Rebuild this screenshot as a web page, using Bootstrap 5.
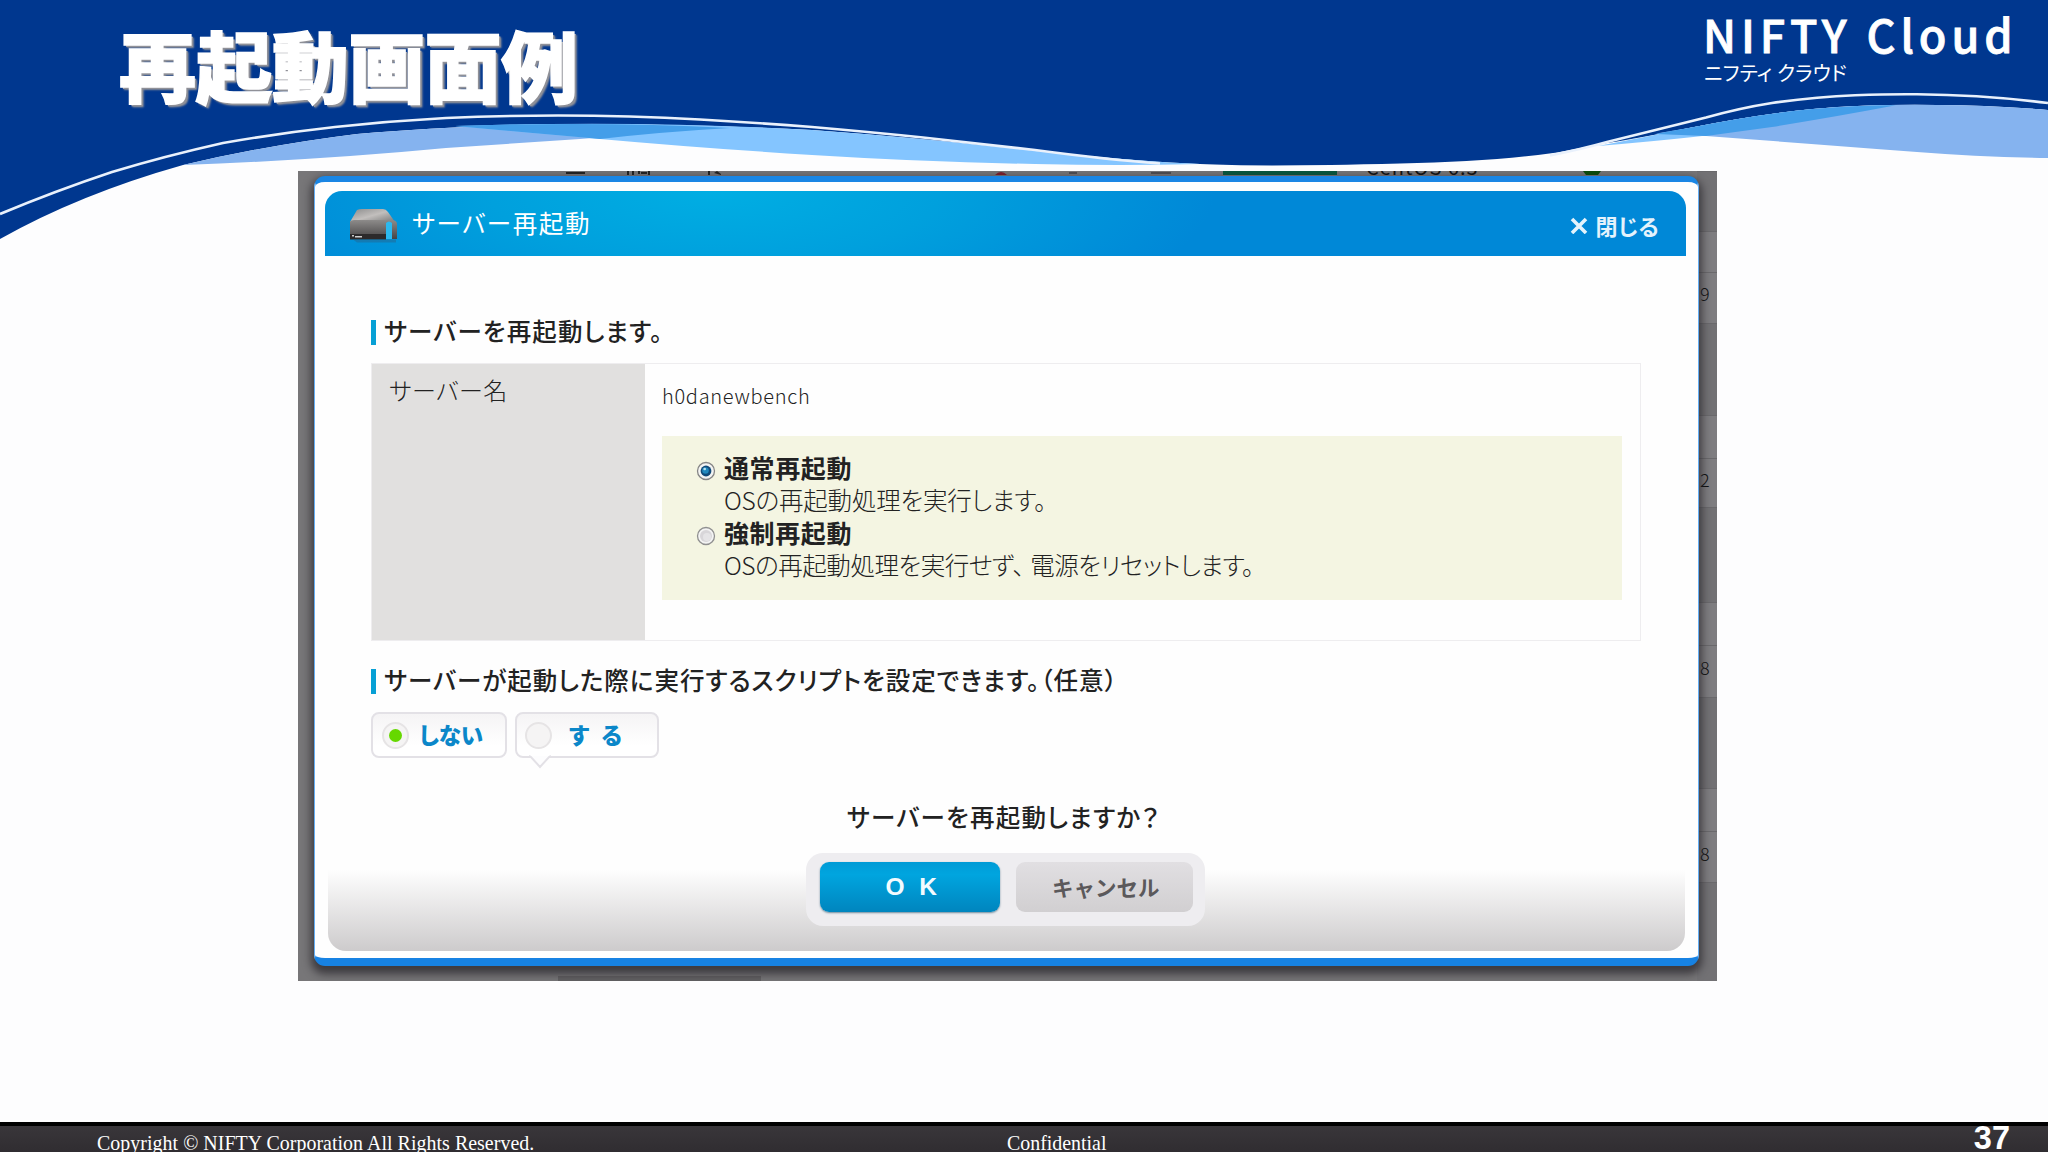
<!DOCTYPE html>
<html lang="ja">
<head>
<meta charset="utf-8">
<title>再起動画面例</title>
<link rel="stylesheet" href="https://cdn.jsdelivr.net/npm/bootstrap@5.3.0/dist/css/bootstrap.min.css">
<script src="https://cdn.jsdelivr.net/npm/bootstrap@5.3.0/dist/js/bootstrap.bundle.min.js"></script>
<style>
body{width:2048px;height:1152px;background:#fdfdfe;font-family:"Noto Sans CJK JP",sans-serif;color:#222;font-feature-settings:"palt"}
.slide{height:1152px}
.top-band{height:171px;color:#fff}
.waves{left:0;top:0;width:2048px;height:242px}
.slide-title{font-size:77px;font-weight:900;line-height:1;letter-spacing:-.6px;margin:25px 0 0 119px;font-feature-settings:normal;-webkit-text-stroke:1.5px #fff;text-shadow:3px 3px 2px #8f9097,2px 2px 0 #a9a9ae}
.brand{width:345px;padding-top:9px}
.brand-en{font-size:45px;line-height:50px;font-weight:500;letter-spacing:4.9px;white-space:nowrap;-webkit-text-stroke:.8px #fff}
.brand-ja{font-size:20px;line-height:26px;letter-spacing:.2px;margin-top:1px;padding-left:1px}
.capture{width:1419px;height:810px;margin-left:298px;background:#777678;overflow:hidden}
.page-behind{inset:0}
.cut-row{height:5px;overflow:hidden;left:0;right:0;top:0}
.cut-row span{position:absolute;line-height:20px;font-size:20px;color:#111;letter-spacing:1px}
.rail{right:0;top:0;width:20px;font-size:18px;color:#111;font-weight:300}
.rail div{border-top:1px solid #6a696c;padding-left:3px}
.lite{background:#7e7d80}.dim{background:#727174}
.dialog-box{margin:5px 0 0 16px;width:1385px;height:790px;border:1px solid #64aef5;border-top:6px solid #1a86e4;border-bottom:8px solid #1782e3;border-radius:11px;background:#fefefe;box-shadow:0 5px 8px 3px rgba(35,33,38,.7);padding:9px 12px 7px 10px}
.dialog-head{height:65px;border-radius:17px 17px 0 0;background:radial-gradient(ellipse 500px 160px at 390px 0,#00aee3 0%,#00a0dd 45%,#0088d7 100%);color:#fff;padding:0 27px 0 22px}
.dlg-title{font-size:24.5px;line-height:30px;margin:-2px 0 0 15px;letter-spacing:1.6px}
.closer{font-size:22px;font-weight:700;line-height:30px;color:#e4f3fc;margin-top:2px;letter-spacing:.4px}
.dialog-main{padding:64px 43px 0 46px}
.sec{font-size:24.5px;line-height:21px;height:25px;font-weight:500;border-left:5px solid #07a0d5;padding-left:8px;white-space:nowrap;letter-spacing:1.15px}
.sec-b{letter-spacing:1px;margin-top:28px}
.info{margin-top:18px;width:1270px;height:278px;border:1.5px solid #eeedef}
.info-key{width:273px;background:#e1e0df;padding:10px 0 0 17px;font-size:24px;line-height:32px;font-weight:300;color:#222;letter-spacing:.5px}
.info-val{padding:17px 18px 0 17px}
.srv{font-size:20px;line-height:30px;font-weight:300;letter-spacing:.7px;margin-bottom:25px}
.opts{background:#f4f5e2;height:164px;padding:15px 0 0 34px}
.opts strong{font-size:25px;line-height:33px;font-weight:700;letter-spacing:.6px;display:block}
.opts p{font-size:24.5px;line-height:33px;font-weight:300;margin:-1px 0 0;white-space:nowrap;letter-spacing:-.2px}
.opts .p-two{letter-spacing:-.45px}
.comma{margin-right:6px}
.pill{height:46px;border:2px solid #e3e1e6;border-radius:8px;background:linear-gradient(#f5f4f5,#fff 75%);font-size:22.5px;font-weight:900;color:#0b87c9;position:relative;line-height:30px}
.pill-text{margin-top:-2px}
.dot{width:27px;height:27px;border-radius:50%;border:2px solid #e6e4e5;background:#f5f4f4}
.dot i{width:13px;height:13px;border-radius:50%;background:#66d800}
.tail{position:absolute;left:12px;top:41px}
.dialog-foot{height:81px;margin:0 1px 0 3px;border-radius:0 0 18px 18px;background:linear-gradient(#fefefe,#cdcbcc)}
.ask{font-size:24.5px;line-height:28px;font-weight:500;margin:45px 4px 0 0;letter-spacing:1.25px}
.tray{width:399px;height:73px;border-radius:17px;background:#eeedf0;left:491px;top:671px;padding:9px 12px 0 14px}
.act{height:50px;border-radius:9px;border:0;line-height:48px;padding:0;font-weight:700}
.ok{width:180px;background:linear-gradient(#009bd6,#00a5df 25%,#0085be);color:#f3fbff;font-size:24.5px;box-shadow:0 1px 2px #6f8c9c;font-family:"Liberation Sans",sans-serif;word-spacing:8px;padding-left:3px}
.no{width:178px;background:linear-gradient(#e1dfe2,#d1cfd1);color:#5b595b;font-size:21.5px;padding-left:3px;line-height:46px}
.foot{height:30px;border-top:4px solid #000;background:linear-gradient(#39363a,#302d31);color:#fff;font-family:"Liberation Serif",serif;font-size:20px;font-feature-settings:normal;padding:0 38px 0 97px;overflow:hidden}
.foot-note{line-height:34px;font-size:19.9px}
.foot-left{width:910px;letter-spacing:.05px}
.page-no{font:700 32.500px/24px "Liberation Sans",sans-serif}
</style>
</head>
<body>
<div class="slide d-flex flex-column overflow-hidden">
<header class="top-band position-relative flex-shrink-0">
<svg class="waves position-absolute" viewBox="0 0 2048 242">
<path fill="#00378f" d="M0 0H2048V110Q1990 105 1937 105Q1870 104 1813 109Q1760 114 1689 128Q1640 138 1607 143L1557 152.500Q1490 162 1400 163.500Q1260 167 1200 164Q1146 162 1035 151Q923 138 812 130Q700 124 558 124Q446 126 357 134Q268 145 183 165Q80 194 0 239Z"/>
<path fill="#85b3ef" d="M183 165Q268 145 357 134Q446 126 558 124Q640 123.500 730 128Q670 132 580 139L446 148Q320 160 183 165Z"/>
<path fill="#84c5ff" d="M455 126Q640 120 812 130Q923 138 1035 151Q1146 162 1200 164Q1120 166 1035 164Q923 162 812 155Q700 148 600 139Q520 132 455 126Z"/>
<path fill="#449ee9" d="M455 126Q600 121 730 128Q660 132 600 139Q520 132 455 126Z"/>
<path fill="#84c5ff" d="M1598 146Q1640 138 1689 128Q1760 114 1813 109Q1855 105.500 1896 105.300Q1840 116 1772 127Q1706 137 1598 146Z"/>
<path fill="#85b3ef" d="M1656 133.500L1689 128Q1760 114 1813 109Q1870 104 1937 105Q1990 105 2048 110V158Q1980 157 1917 152Q1800 143 1706 136Z"/>
<path fill="#449ee9" d="M1656 134Q1670 131 1689 128Q1760 114 1813 109Q1855 105.500 1896 105.300Q1840 116 1772 127L1706 136Z"/>
<path fill="none" stroke="#e9f1fc" stroke-width="2.600" d="M0 214Q55 191 112 172Q165 156 223 143Q280 133 335 127Q390 121 446 118Q500 115.500 558 115.500Q630 115.500 700 119.500Q760 123 812 127Q870 132 923 137.500L1035 150Q1110 160 1160 163.500"/>
<path fill="none" stroke="#e9f1fc" stroke-width="2.600" d="M1550 155.500Q1582 149 1607 142L1706 117.500Q1740 108 1772 103Q1815 97 1855 95.300Q1890 94 1917 94.300Q1985 95 2048 103"/>
</svg>
<div class="position-relative d-flex justify-content-between align-items-start">
<h1 class="slide-title">再起動画面例</h1>
<div class="brand"><div class="brand-en">NIFTY Cloud</div><div class="brand-ja">ニフティ クラウド</div></div>
</div>
</header>
<main class="capture position-relative flex-shrink-0">
<div class="page-behind position-absolute">
<svg class="position-absolute top-0 start-0" width="1419" height="810"><path fill="#222" d="M268 1h19v2h-19zM329 0h2v4h-2zM334 0h2v4h-2zM340 0h2v3h-2zM343 1h6v2h-6zM350 0h2v4h-2zM410 0h2v4h-2zM416 2l3-2 4 3v1z"/><path fill="#7e1d2b" d="M697 4q6-6 12 0z"/><path fill="#4e4d52" d="M771 1h8v2h-8zM853 1h20v2h-20z"/><path fill="#07573f" d="M925 0h114v4H925z"/><path fill="#0b4d0a" d="M1285 0h18l-3 4h-12z"/><path fill="#626163" d="M260 805h203v5H260z"/></svg>
<div class="cut-row position-absolute"><span style="left:1068px;bottom:-1px">CentOS 6.3</span></div>
<div class="rail position-absolute">
<div class="dim" style="height:60px"></div><div class="lite" style="height:41px"></div><div class="lite" style="height:51px;line-height:41px">9</div>
<div class="dim" style="height:92px"></div><div class="lite" style="height:43px"></div><div class="lite" style="height:49px;line-height:41px">2</div>
<div class="dim" style="height:95px"></div><div class="lite" style="height:43px"></div><div class="lite" style="height:52px;line-height:42px">8</div>
<div class="dim" style="height:91px"></div><div class="lite" style="height:43px"></div><div class="lite" style="height:51px;line-height:42px">8</div>
<div class="dim" style="height:99px"></div>
</div>
</div>
<section class="dialog-box position-relative d-flex flex-column">
<div class="dialog-head d-flex align-items-center flex-shrink-0">
<svg width="50" height="40" viewBox="0 0 50 40"><defs><linearGradient id="lid" x1="0" y1="0" x2="1" y2="1"><stop stop-color="#8b8b8b"/><stop offset=".5" stop-color="#c2bfbd"/><stop offset="1" stop-color="#777"/></linearGradient><linearGradient id="front" x1="0" y1="0" x2="0" y2="1"><stop stop-color="#8d8b8a"/><stop offset="1" stop-color="#454344"/></linearGradient></defs><g transform="translate(0 2)"><path fill="url(#lid)" d="M10 4Q12 3 15 3H36Q39 3 41 6L48 16H3Z"/><path fill="url(#front)" d="M3 15.500Q4 14 7 14H44Q50 14 50 18V33H3Z"/><path fill="#2c2a2b" d="M3 28H39V33.500H3Z"/><path fill="#2bb9ef" d="M39 17q3-3 6 0v16h-6z"/><path fill="#2a5f85" opacity=".45" d="M6 33.500h43v3H10z"/><path fill="#ccc" d="M5 29h2v1.500H5zM8 30h7v1.500H8z"/></g></svg>
<div class="dlg-title">サーバー再起動</div>
<div class="closer ms-auto d-flex align-items-center gap-2"><svg width="18" height="18" viewBox="0 0 18 18"><path d="M2 3L16 17M16 3L2 17" stroke="#e4f3fc" stroke-width="3.600"/></svg><span>閉じる</span></div>
</div>
<div class="dialog-main">
<div class="sec">サーバーを再起動します。</div>
<div class="info d-flex">
<div class="info-key flex-shrink-0">サーバー名</div>
<div class="info-val flex-grow-1">
<div class="srv">h0danewbench</div>
<div class="opts">
<div class="d-flex gap-2"><svg class="flex-shrink-0 mt-2" width="20" height="22" viewBox="0 0 20 22"><circle cx="10" cy="12" r="8.500" fill="#f3f4f3" stroke="#858585" stroke-width="1.300"/><circle cx="10" cy="12" r="5.400" fill="#114a79"/><circle cx="9.500" cy="11.500" r="3.300" fill="#2188bd"/><circle cx="8.700" cy="10" r="1.300" fill="#b9e3f4"/></svg><div><strong>通常再起動</strong><p>OSの再起動処理を実行します。</p></div></div>
<div class="d-flex gap-2"><svg class="flex-shrink-0 mt-2" width="20" height="22" viewBox="0 0 20 22"><circle cx="10" cy="12" r="8.500" fill="#f3f3f3" stroke="#909090" stroke-width="1.300"/><circle cx="10" cy="12" r="6" fill="#d8d6d9"/><circle cx="11" cy="13" r="4" fill="#e5e4e6"/></svg><div><strong>強制再起動</strong><p class="p-two">OSの再起動処理を実行せず<span class="comma">、</span>電源をリセットします。</p></div></div>
</div>
</div>
</div>
<div class="sec sec-b">サーバーが起動した際に実行するスクリプトを設定できます。（任意）</div>
<div class="d-flex gap-2" style="margin-top:18px">
<div class="pill d-flex align-items-center" style="width:136px;padding-left:9px"><span class="dot d-flex align-items-center justify-content-center"><i></i></span><span class="pill-text" style="margin-left:10px">しない</span></div>
<div class="pill d-flex align-items-center" style="width:144px;padding-left:8px"><svg class="tail" width="22" height="14" viewBox="0 0 22 14"><path d="M0 1L2 2L11 12L20 2L22 1" fill="#fdfdfe" stroke="#e3e1e6" stroke-width="2"/></svg><span class="dot"></span><span class="pill-text" style="margin-left:17px;letter-spacing:12px">する</span></div>
</div>
</div>
<div class="ask text-center">サーバーを再起動しますか？</div>
<div class="dialog-foot mt-auto"></div>
<div class="tray position-absolute d-flex gap-3"><button class="btn act ok" type="button">O K</button><button class="btn act no" type="button">キャンセル</button></div>
</section>
</main>
<footer class="foot mt-auto d-flex position-relative"><div class="foot-note foot-left">Copyright © NIFTY Corporation All Rights Reserved.</div><div class="foot-note">Confidential</div><div class="page-no ms-auto">37</div></footer>
</div>
</body>
</html>
